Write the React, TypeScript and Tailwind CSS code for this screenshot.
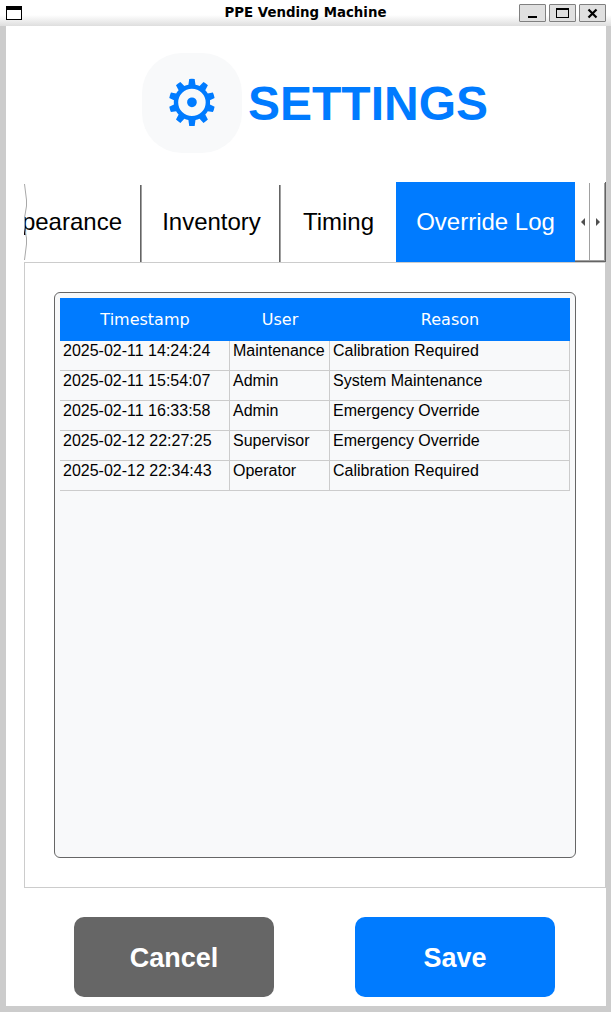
import React from "react";

const rows: [string, string, string][] = [
  ["2025-02-11 14:24:24", "Maintenance", "Calibration Required"],
  ["2025-02-11 15:54:07", "Admin", "System Maintenance"],
  ["2025-02-11 16:33:58", "Admin", "Emergency Override"],
  ["2025-02-12 22:27:25", "Supervisor", "Emergency Override"],
  ["2025-02-12 22:34:43", "Operator", "Calibration Required"],
];

const winButton =
  "flex h-[18px] w-[27px] items-center justify-center rounded-[1px] border border-[#808080] bg-[#e0e0e0]";

function TitleBar() {
  return (
    <header className="relative flex h-[26px] shrink-0 items-start justify-between bg-[linear-gradient(#ffffff_0px,#ffffff_15px,#dedede_26px)] pl-[6px] pr-[5px]">
      <svg className="mt-[6px]" width="16" height="14" shapeRendering="crispEdges">
        <rect width="16" height="14" fill="#000" />
        <rect x="1" y="4" width="14" height="9" fill="#fff" />
      </svg>
      <h1 className="absolute inset-x-0 top-[5px] text-center font-['DejaVu_Sans',sans-serif] text-[13.33px] leading-[16px] font-bold text-black">
        PPE Vending Machine
      </h1>
      <div className="relative mt-[4px] flex gap-[3px]">
        <button aria-label="Minimize" className={winButton}>
          <svg width="25" height="16" shapeRendering="crispEdges">
            <rect x="8" y="11" width="9" height="2" fill="#000" />
          </svg>
        </button>
        <button aria-label="Maximize" className={winButton}>
          <svg width="25" height="16" shapeRendering="crispEdges">
            <rect x="6" y="3" width="13" height="10" fill="#000" />
            <rect x="7" y="5" width="11" height="7" fill="#e0e0e0" />
          </svg>
        </button>
        <button aria-label="Close" className={winButton}>
          <svg width="25" height="16">
            <path d="M8.5 4.5l8 8M16.5 4.5l-8 8" stroke="#000" strokeWidth="2.2" />
          </svg>
        </button>
      </div>
    </header>
  );
}

function Separator() {
  return <div className="mt-[3px] w-[2px] shrink-0 border-l border-[#646464] bg-[#a0a0a0]" />;
}

function Tabs() {
  return (
    <nav className="relative flex h-[80px] shrink-0 text-[24px] leading-[80px] text-black">
      <div className="flex w-[116px] shrink-0 justify-end overflow-hidden pr-[18px]">
        <span className="shrink-0">Appearance</span>
      </div>
      <Separator />
      <div className="w-[137px] shrink-0 pl-[2px] text-center">Inventory</div>
      <Separator />
      <div className="w-[115px] shrink-0 text-center">Timing</div>
      <div className="w-[179px] shrink-0 bg-[#007bff] text-center text-white">Override Log</div>
      <div className="flex w-[31px] shrink-0 border-r border-b border-[#646464]">
        <button aria-label="Previous tabs" className="mt-px flex w-[15px] items-center border-r border-b border-[#a0a0a0] pl-[6px]">
          <svg width="4" height="8"><path d="M4 0v8L0 4z" fill="#505050" /></svg>
        </button>
        <button aria-label="Next tabs" className="mt-px flex w-[15px] items-center border-r border-b border-[#a0a0a0] pl-[6px]">
          <svg width="4" height="8"><path d="M0 0v8L4 4z" fill="#505050" /></svg>
        </button>
      </div>
      <svg className="absolute top-[2px] left-0" width="4" height="78">
        <path d="M.5 0L2.5 16V22L.5 34V44L2.5 54V60L.5 76" fill="none" stroke="#a8a8a8" />
      </svg>
    </nav>
  );
}

function LogTable() {
  return (
    <div className="flex-1 rounded-[6px] border border-[#666666] bg-[#f8f9fa] p-[5px]">
      <table className="w-[510px] table-fixed border-separate border-spacing-0 text-[16px] leading-[18px] text-black">
        <colgroup>
          <col className="w-[170px]" />
          <col className="w-[100px]" />
          <col className="w-[240px]" />
        </colgroup>
        <thead className="bg-[#007bff] font-['DejaVu_Sans',sans-serif] text-white">
          <tr className="h-[43px]">
            <th className="font-normal">Timestamp</th>
            <th className="font-normal">User</th>
            <th className="font-normal">Reason</th>
          </tr>
        </thead>
        <tbody>
          {rows.map((row) => (
            <tr key={row[0]} className="h-[30px]">
              {row.map((cell, i) => (
                <td key={i} className="border-r border-b border-[#cccccc] pt-px pl-[3px] align-top whitespace-nowrap">
                  {cell}
                </td>
              ))}
            </tr>
          ))}
        </tbody>
      </table>
    </div>
  );
}

export default function App() {
  return (
    <div className="flex h-[1012px] w-[611px] flex-col overflow-hidden bg-[#cccccc] font-['Liberation_Sans',Arial,sans-serif]">
      <TitleBar />
      <main className="mr-[5px] mb-[6px] ml-[6px] flex flex-1 flex-col bg-white pl-[18px]">
        <div className="flex h-[156px] shrink-0 items-start pt-[27px] pl-[118px]">
          <div className="flex size-[100px] items-center justify-center rounded-[40px] bg-[#f8f9fa] font-['DejaVu_Sans',sans-serif] text-[64px] leading-[100px] text-[#007bff]">
            ⚙
          </div>
          <h2 className="ml-[6px] pt-px text-[48px] leading-[100px] font-bold text-[#007bff]">SETTINGS</h2>
        </div>
        <Tabs />
        <section className="flex h-[626px] shrink-0 flex-col border border-[#cccccc] px-[29px] pt-[29px] pb-[29px]">
          <LogTable />
        </section>
        <footer className="flex gap-[81px] pt-[29px] pl-[50px] text-[27px] leading-[78px] font-bold text-white">
          <button className="h-[80px] w-[200px] rounded-[10px] bg-[#666666] pt-[2px]">Cancel</button>
          <button className="h-[80px] w-[200px] rounded-[10px] bg-[#007bff] pt-[2px]">Save</button>
        </footer>
      </main>
    </div>
  );
}
